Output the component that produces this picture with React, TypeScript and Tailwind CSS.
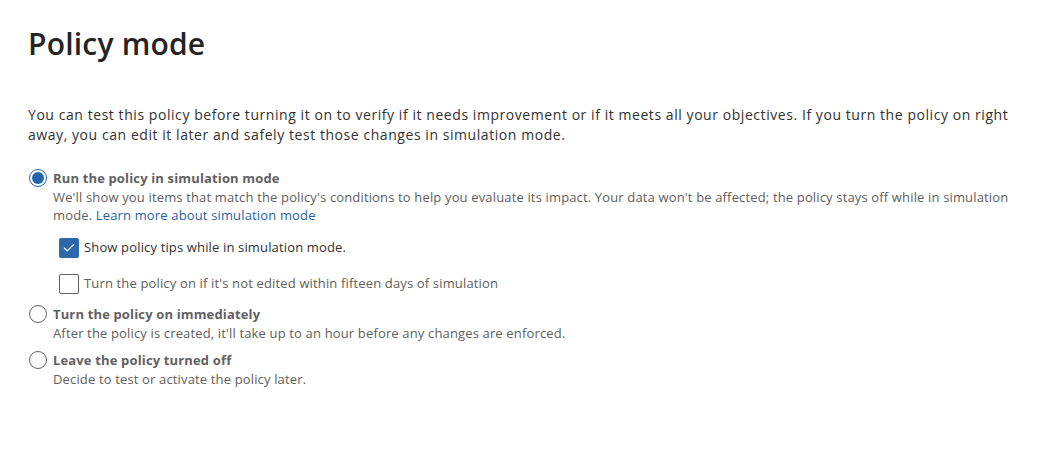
import { Check } from "lucide-react";

type Option = {
  label: string;
  desc: React.ReactNode;
  checked?: boolean;
  children?: React.ReactNode;
};

function Radio({ checked }: { checked?: boolean }) {
  return (
    <span
      className={
        "mt-[1px] flex h-[18px] w-[18px] shrink-0 items-center justify-center rounded-full border " +
        (checked ? "border-[#2266b0]" : "border-[#616161]")
      }
    >
      {checked && <span className="h-[12px] w-[12px] rounded-full bg-[#2266b0]" />}
    </span>
  );
}

function Checkbox({ checked, label }: { checked?: boolean; label: string }) {
  return (
    <div className="flex items-center gap-[5px]">
      <span
        className={
          "flex h-[20px] w-[20px] items-center justify-center rounded-[2px] border " +
          (checked ? "border-[#2f67ab] bg-[#2f67ab]" : "border-[#616161] bg-white")
        }
      >
        {checked && <Check size={14} strokeWidth={2} className="text-white" />}
      </span>
      <span className={"text-[13px] tracking-[0.15px] " + (checked ? "text-[#323130]" : "text-[#605e5c]")}>
        {label}
      </span>
    </div>
  );
}

export default function App() {
  const options: Option[] = [
    {
      label: "Run the policy in simulation mode",
      checked: true,
      desc: (
        <>
          <span className="block whitespace-nowrap">
            We'll show you items that match the policy's conditions to help you evaluate its impact. Your data won't be
            affected; the policy stays off while in simulation
          </span>
          <span className="block">
            <span>mode. </span>
            <a href="#" className="text-[#1f5fa8]">
              Learn more about simulation mode
            </a>
          </span>
        </>
      ),
      children: (
        <div className="mt-[14px] flex flex-col gap-[16px] pb-[2px] pl-[6px]">
          <Checkbox checked label="Show policy tips while in simulation mode." />
          <Checkbox label="Turn the policy on if it's not edited within fifteen days of simulation" />
        </div>
      ),
    },
    {
      label: "Turn the policy on immediately",
      desc: "After the policy is created, it'll take up to an hour before any changes are enforced.",
    },
    {
      label: "Leave the policy turned off",
      desc: "Decide to test or activate the policy later.",
    },
  ];

  return (
    <div className="h-[449px] w-[1042px] bg-white px-7 pt-[26px] text-[#323130] [font-family:'Segoe_UI','Open_Sans',sans-serif]">
      <h1 className="text-[30px] font-semibold leading-[36px] tracking-[0.2px] text-[#242424]">Policy mode</h1>

      <p className="mt-[43px] text-[14px] leading-[20px] tracking-[0.56px]">
        You can test this policy before turning it on to verify if it needs improvement or if it meets all your
        objectives. If you turn the policy on right away, you can edit it later and safely test those changes in
        simulation mode.
      </p>

      <div className="mt-[23px] flex flex-col gap-[8px]">
        {options.map((o) => (
          <div key={o.label} className="flex gap-[6px] pl-[1px]">
            <Radio checked={o.checked} />
            <div className="flex flex-col">
              <span className="text-[13px] font-bold leading-[20px] tracking-[0.15px] text-[#616161]">{o.label}</span>
              <div className="text-[13px] leading-[18px] tracking-[0.15px] text-[#605e5c]">{o.desc}</div>
              {o.children}
            </div>
          </div>
        ))}
      </div>
    </div>
  );
}
